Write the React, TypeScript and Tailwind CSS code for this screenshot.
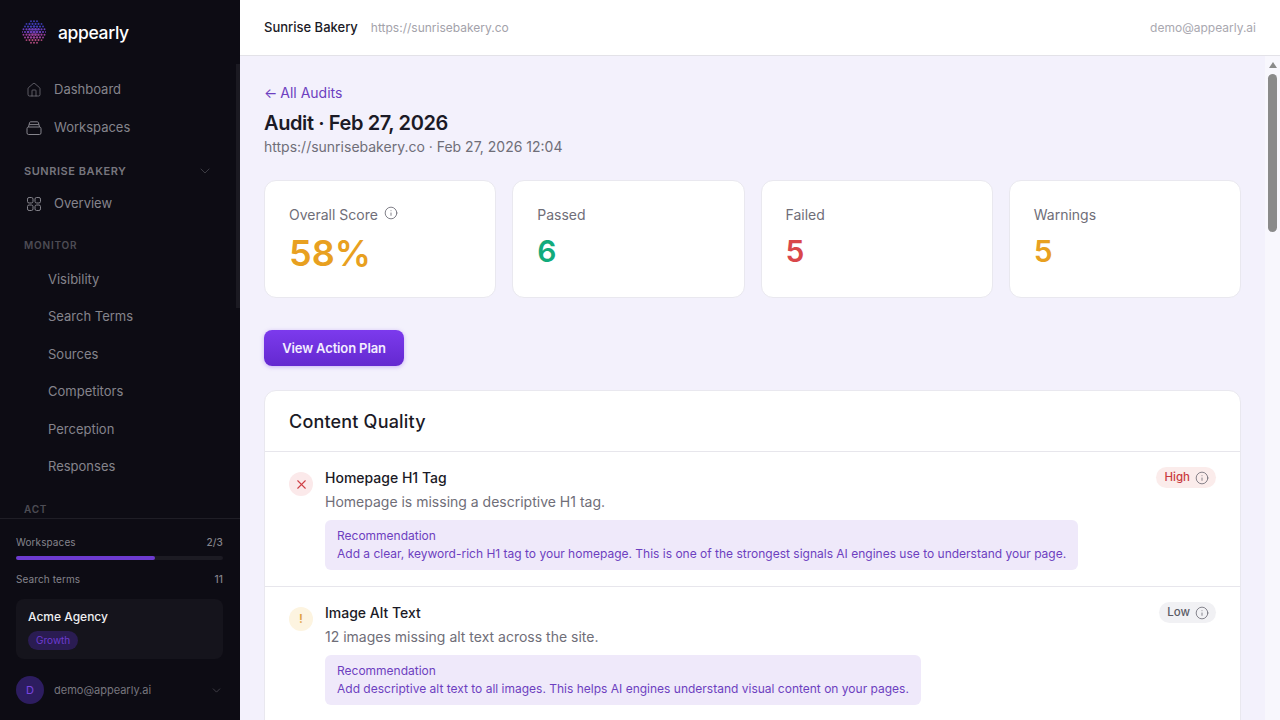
import { ChevronDown, House, Info, X } from "lucide-react";

const monitorLinks = ["Visibility", "Search Terms", "Sources", "Competitors", "Perception", "Responses"];

const stats = [
  { label: "Passed", value: "6", color: "text-[#12ab7c]" },
  { label: "Failed", value: "5", color: "text-[#d9474b]" },
  { label: "Warnings", value: "5", color: "text-[#e8a020]" },
];

// dot globe for the logo
const logoDots: { x: number; y: number; r: number; c: string }[] = [];
for (let row = -4; row <= 4; row++) {
  for (let col = -5; col <= 5; col++) {
    const x = 12 + (col + (row % 2 === 0 ? 0 : 0.5)) * 3;
    const y = 12 + row * 2.7;
    const d = Math.hypot(x - 12, y - 12);
    if (d > 12) continue;
    const t = y / 24;
    const c = t < 0.3 ? "#3d3bb4" : t < 0.55 ? "#6a3db8" : t < 0.8 ? "#9a3f9c" : "#b04a7c";
    logoDots.push({ x, y, r: 1.55 - (d / 12) * 0.65, c });
  }
}

function Logo() {
  return (
    <svg width="24" height="24" viewBox="0 0 24 24" className="shrink-0">
      {logoDots.map((dot) => (
        <circle key={`${dot.x}-${dot.y}`} cx={dot.x} cy={dot.y} r={dot.r} fill={dot.c} />
      ))}
    </svg>
  );
}

function WorkspacesIcon() {
  return (
    <svg width="16" height="16" viewBox="0 0 16 16" fill="none" stroke="currentColor" strokeWidth="1" className="shrink-0">
      <rect x="1" y="7" width="14" height="7.5" rx="1.6" />
      <path d="M2.5 7 3.6 2.6c.1-.5.5-.8 1-.8h6.8c.5 0 .9.3 1 .8L13.5 7" />
      <path d="M3.2 4.6h9.6" />
    </svg>
  );
}

function OverviewIcon() {
  return (
    <svg width="16" height="16" viewBox="0 0 16 16" fill="none" stroke="currentColor" strokeWidth="1" className="shrink-0">
      <rect x="1.5" y="1.5" width="5.5" height="5.5" rx="1.6" />
      <rect x="9" y="1.5" width="5.5" height="5.5" rx="1.6" />
      <rect x="1.5" y="9" width="5.5" height="5.5" rx="1.6" />
      <rect x="9" y="9" width="5.5" height="5.5" rx="1.6" />
    </svg>
  );
}

function Sidebar() {
  return (
    <aside className="relative w-[240px] h-full shrink-0 flex flex-col bg-[#0d0c14] text-[#85848c]">
      <div className="h-16 shrink-0 flex items-center gap-3 pl-[22px]">
        <Logo />
        <span className="pt-[2px] text-[17.5px] font-medium tracking-[-0.02em] text-white">appearly</span>
      </div>

      <nav className="flex-1 min-h-0 overflow-hidden">
        <div className="pt-[7px]">
          <a className="h-[38px] flex items-center gap-3 pl-[26px] text-[13px]">
            <House size={16} strokeWidth={1} className="shrink-0" />
            Dashboard
          </a>
          <a className="h-[38px] flex items-center gap-3 pl-[26px] text-[13px]">
            <WorkspacesIcon />
            Workspaces
          </a>
        </div>

        <div className="mt-[14px] h-5 flex items-center justify-between pl-6 pr-[27px] text-[11px] font-semibold tracking-[0.05em] text-[#77767e]">
          SUNRISE BAKERY
          <ChevronDown size={16} strokeWidth={1} className="text-[#55545c]" />
        </div>
        <a className="mt-[4px] h-[38px] flex items-center gap-3 pl-[26px] text-[13px]">
          <OverviewIcon />
          Overview
        </a>

        <div className="mt-[12px] pl-6 h-5 flex items-center text-[10px] font-semibold tracking-[0.08em] text-[#4d4c54]">MONITOR</div>
        <div className="mt-[5.5px]">
          {monitorLinks.map((link) => (
            <a key={link} className="h-[37.5px] flex items-center pl-12 text-[13px]">
              {link}
            </a>
          ))}
        </div>

        <div className="mt-[13.5px] pl-6 h-5 flex items-center text-[10px] font-semibold tracking-[0.08em] text-[#4d4c54]">ACT</div>
      </nav>

      {/* scrollbar of the nav list */}
      <div className="absolute right-0 top-16 w-1 h-[244px] bg-[#1b1a22]" />

      <div className="shrink-0 h-[202px] border-t border-[#1f1e26] pl-4 pr-[17px] pt-4">
        <div className="flex items-center justify-between text-[10px] tracking-[0.01em] leading-[14px]">
          <span>Workspaces</span>
          <span className="font-medium">2/3</span>
        </div>
        <div className="mt-[7px] h-1 rounded-full bg-[#1c1b23]">
          <div className="h-full w-[139px] rounded-full bg-[#6d3bd0]" />
        </div>
        <div className="mt-[12px] flex items-center justify-between text-[10px] tracking-[0.01em] leading-[14px]">
          <span>Search terms</span>
          <span className="font-medium">11</span>
        </div>
        <div className="mt-[13px] h-[60px] rounded-lg bg-[#15141c] px-3 pt-[10px]">
          <div className="text-[12px] leading-4 font-medium text-[#eeeef0]">Acme Agency</div>
          <span className="mt-[6px] inline-block h-[19px] rounded-full bg-[#2a1c52] px-2 text-[10px] leading-[19px] text-[#6d3bd0]">Growth</span>
        </div>
        <div className="mt-[17px] flex items-center">
          <span className="size-7 rounded-full bg-[#2d1d60] flex items-center justify-center text-[11px] text-[#7a45e0]">D</span>
          <span className="ml-[10px] flex-1 text-[11px] text-[#77767e]">demo@appearly.ai</span>
          <ChevronDown size={13} strokeWidth={1} className="text-[#66656d]" />
        </div>
      </div>
    </aside>
  );
}

function Recommendation({ text }: { text: string }) {
  return (
    <div className="mt-[7px] w-fit rounded-md bg-[#efe9fa] px-3 py-[7px] text-[12px] leading-[18px] text-[#6d3fc0]">
      <div>Recommendation</div>
      <div>{text}</div>
    </div>
  );
}

function AuditRow(props: { title: string; desc: string; rec: string; level: "High" | "Low" }) {
  const high = props.level === "High";
  return (
    <div className="flex items-start border-t border-[#e7e6ec] pt-[15px] pr-6 pl-6 h-[135px]">
      <span className={`mt-[5px] size-6 shrink-0 rounded-full flex items-center justify-center ${high ? "bg-[#fbe9ea] text-[#cf3f45]" : "bg-[#fdf4e0] text-[#e0a040]"}`}>
        {high ? <X size={15} strokeWidth={1.75} /> : <span className="text-[12px] font-semibold leading-none">!</span>}
      </span>
      <div className="ml-3 flex-1 min-w-0">
        <div className="text-[14px] leading-[22px] font-medium text-[#1b1a26]">{props.title}</div>
        <div className="mt-[2px] text-[14px] leading-[22px] text-[#6f6e78]">{props.desc}</div>
        <Recommendation text={props.rec} />
      </div>
      <span className={`h-[21px] rounded-full pl-2 pr-[7px] flex items-center gap-[5px] text-[11.5px] font-medium ${high ? "bg-[#fbeceb] text-[#c93a40]" : "bg-[#f1f1f4] text-[#5c5b66]"}`}>
        {props.level}
        <Info size={14} strokeWidth={1.25} className="text-[#5c5b66]" />
      </span>
    </div>
  );
}

export default function App() {
  return (
    <div className="h-screen flex overflow-hidden font-['Inter',sans-serif]">
      <Sidebar />
      <div className="flex-1 min-w-0 flex flex-col">
        <header className="h-14 shrink-0 flex items-center justify-between border-b border-[#e3e2e8] bg-white px-6">
          <div className="flex items-center gap-[13px]">
            <span className="text-[13px] font-medium text-[#1b1a26]">Sunrise Bakery</span>
            <span className="text-[12px] text-[#a3a2aa]">https://sunrisebakery.co</span>
          </div>
          <span className="text-[12px] text-[#a9a8b0]">demo@appearly.ai</span>
        </header>

        <div className="relative flex-1 min-h-0">
          <main className="h-full overflow-hidden bg-[#f3f1fc] pl-6 pr-[39px] pt-[26px]">
            <a className="block text-[14px] leading-[22px] text-[#6d3fc0]">
              <span className="-mr-px">←</span> All Audits
            </a>
            <h1 className="mt-[5px] text-[20px] leading-7 font-semibold tracking-[-0.02em] text-[#1b1a26]">Audit · Feb 27, 2026</h1>
            <p className="text-[14px] leading-[20px] text-[#6f6e78]">https://sunrisebakery.co · Feb 27, 2026 12:04</p>

            <div className="mt-[23px] grid grid-cols-4 gap-4">
              <div className="h-[118px] rounded-xl border border-[#e9e8ef] bg-white px-6 pt-6">
                <div className="flex items-center gap-[6px] text-[14px] leading-5 text-[#6f6e78]">
                  Overall Score
                  <Info size={14} strokeWidth={1.5} className="-mt-[5px]" />
                </div>
                <div className="mt-1 text-[36px] leading-[48px] font-semibold text-[#e8a020]">58%</div>
              </div>
              {stats.map((stat) => (
                <div key={stat.label} className="h-[118px] rounded-xl border border-[#e9e8ef] bg-white px-6 pt-6">
                  <div className="text-[14px] leading-5 text-[#6f6e78]">{stat.label}</div>
                  <div className={`mt-[5px] text-[30px] leading-[42px] font-semibold ${stat.color}`}>{stat.value}</div>
                </div>
              ))}
            </div>

            <button className="mt-8 block h-9 w-[140px] rounded-lg bg-gradient-to-b from-[#7c3aed] to-[#6429d0] pt-px text-[13px] font-semibold tracking-[-0.01em] text-[#f3edff] shadow-[0_1px_4px_rgba(124,58,237,.35)]">
              View Action Plan
            </button>

            <section className="mt-6 mb-6 min-h-[500px] rounded-xl border border-[#e9e8ef] bg-white">
              <h2 className="h-[60px] flex items-center px-6 text-[18px] font-medium tracking-[0.01em] text-[#1b1a26]">Content Quality</h2>
              <AuditRow
                title="Homepage H1 Tag"
                desc="Homepage is missing a descriptive H1 tag."
                rec="Add a clear, keyword-rich H1 tag to your homepage. This is one of the strongest signals AI engines use to understand your page."
                level="High"
              />
              <AuditRow
                title="Image Alt Text"
                desc="12 images missing alt text across the site."
                rec="Add descriptive alt text to all images. This helps AI engines understand visual content on your pages."
                level="Low"
              />
            </section>
          </main>

          {/* page scrollbar */}
          <div className="absolute right-0 inset-y-0 w-[15px] bg-[#f8f7fd]">
            <div className="mx-auto mt-[6px] h-0 w-0 border-x-[4px] border-b-[6px] border-x-transparent border-b-[#8a8a8a]" />
            <div className="mx-auto mt-[6px] h-[158px] w-[9px] rounded-full bg-[#8a8a8a]" />
          </div>
        </div>
      </div>
    </div>
  );
}
